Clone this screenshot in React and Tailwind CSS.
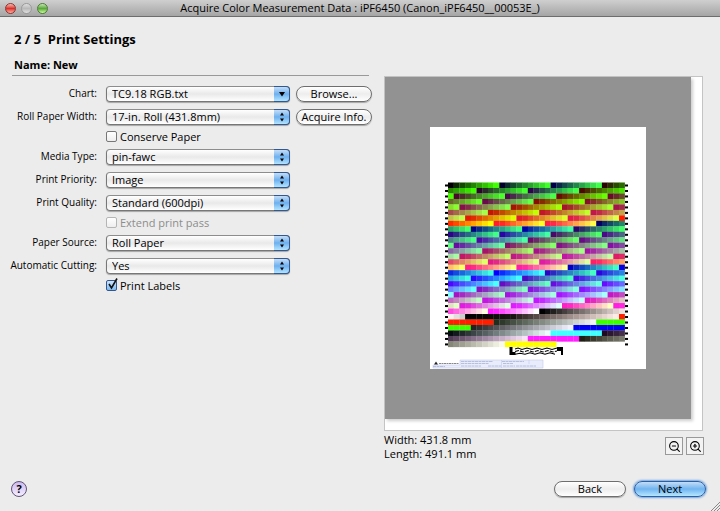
import { ZoomIn, ZoomOut } from "lucide-react";

const COLS = 31;
const LEVELS = [0, 42, 74, 104, 134, 164, 194, 224, 255];

const display = ([r, g, b]) =>
  `rgb(${Math.round(Math.max(r, g * 0.25))},${Math.round(Math.max(g, r * 0.12))},${Math.round(b)})`;

const repeat = (color, n) => Array.from({ length: n }, () => display(color));

const ramp = (n, from, to) =>
  Array.from({ length: n }, (_, i) => {
    const t = i / (n - 1);
    return `rgb(${from.map((c, k) => Math.round(c + (to[k] - c) * t)).join(",")})`;
  });

function buildPatches() {
  const patches = [];
  for (let block = 0; block < 3; block++) {
    for (const r of LEVELS) {
      for (let step = 0; step < 3; step++) {
        for (const g of LEVELS) {
          patches.push(display([r, g, LEVELS[block * 3 + step]]));
        }
      }
    }
  }
  return patches.concat(
    ramp(15, [0, 0, 0], [240, 225, 220]),
    ramp(3, [250, 240, 240], [205, 205, 205]),
    ramp(9, [0, 0, 0], [25, 20, 18]),
    ramp(18, [50, 38, 36], [255, 235, 230]),
    repeat([255, 30, 0], 9),
    ramp(18, [35, 45, 30], [240, 245, 245]),
    repeat([0, 255, 0], 9),
    ramp(18, [35, 35, 35], [240, 240, 255]),
    repeat([0, 0, 240], 9),
    ramp(18, [5, 12, 15], [235, 250, 250]),
    repeat([40, 255, 255], 9),
    ramp(18, [30, 10, 35], [250, 225, 250]),
    repeat([255, 0, 255], 9),
    ramp(18, [30, 30, 20], [250, 250, 235]),
    repeat([255, 255, 0], 9)
  );
}

const PATCHES = buildPatches();

function Chart() {
  return (
    <svg viewBox="0 0 216 242" className="block w-full">
      <g transform="translate(18 55.5)">
        {PATCHES.map((fill, i) => (
          <rect
            key={i}
            x={(i % COLS) * 5.7}
            y={Math.floor(i / COLS) * 5.48}
            width="5.9"
            height="5.7"
            fill={fill}
          />
        ))}
        {Array.from({ length: 30 }, (_, i) => (
          <g key={i}>
            <rect x="-3" y={i * 5.48 + 2} width="3" height="2" />
            <rect x="177" y={i * 5.48 + 2} width="3" height="2" />
          </g>
        ))}
      </g>
      {/* alignment strip */}
      <path d="M79.500 220h3v5h3v3h-6zM127 220h6v8h-2v-4h-4z" />
      <g fill="none" stroke="#000" strokeWidth="1.100">
        <path d="M85 222l3-1 4 1.500 5-1.500 5 1.500 5-1.500 5 1.500 5-1.500 5 1.500 5-1.500" />
        <path d="M85 224.500l4-1 4 1.500 5-1.500 5 1.500 5-1.500 5 1.500 5-1.500 5 1.500 4-1" strokeDasharray="4 1.200" />
        <path d="M85 227.300l5-1 5 1 5-1.500 5 1.500 5-1.500 5 1.500 5-1.500 5 1.500" />
      </g>
      {/* caption block */}
      <path d="M30 233h83v8H3v-3h27z" fill="#e9edfb" stroke="#b9c3e6" strokeWidth="0.5" />
      <path d="M4 237.500l2-3 2 3z" fill="#222" />
      <path d="M9 236.500h20" stroke="#888" strokeDasharray="2 0.500" />
      <path
        d="M31 234.500h32M72 234.500h22M31 236.500h28M31 239h20M58 239h13M73 236.500h10M73 239h12M3 239.500h12M86 239h20"
        stroke="#a9b3d6"
        strokeWidth="0.800"
        strokeDasharray="3 0.500"
      />
      <path d="M71.500 233v8M99 233v4" stroke="#b9c3e6" strokeWidth="0.500" />
    </svg>
  );
}

function Select({ id, value, single }) {
  return (
    <div className="relative h-4 w-[184px]">
      <select
        id={id}
        defaultValue={value}
        className="block h-4 w-full appearance-none rounded border border-[#777] border-t-[#8d8d8d] bg-linear-to-b from-white via-[#e9e9e9] to-white pl-[5px] text-[11px] leading-[14px] text-black shadow-[0_1px_1px_rgba(0,0,0,0.3)]"
      >
        <option>{value}</option>
      </select>
      <span className="pointer-events-none absolute inset-y-0 right-0 flex w-4 items-center justify-center rounded-r border border-l-0 border-[#33588f] bg-linear-to-b from-[#c5ddf6] via-[#6cb0ef] to-[#b4e4ff]">
        <svg viewBox="0 0 8 10" className="h-2.5 w-2">
          {single ? (
            <path d="M1 3h6L4 7.500z" />
          ) : (
            <path d="M4 0.500L6 3.500H2zM4 9.500L2 6.500h4z" />
          )}
        </svg>
      </span>
    </div>
  );
}

function PushButton({ children, className }) {
  return (
    <button
      type="button"
      className={`h-4 rounded-full border border-[#6e6e6e] bg-linear-to-b from-white via-[#ededed] to-white text-[11px] leading-[14px] shadow-[0_1px_1px_rgba(0,0,0,0.3)] ${className}`}
    >
      {children}
    </button>
  );
}

function Row({ id, label, value, single, children }) {
  return (
    <div className="flex h-[23px] items-center">
      <label htmlFor={id} className="w-[97px] shrink-0 pb-0.5 text-right text-[10px] leading-4">
        {label}
      </label>
      <div className="ml-[9px] flex items-center gap-1.5">
        <Select id={id} value={value} single={single} />
        {children}
      </div>
    </div>
  );
}

function Check({ label, checked, disabled }) {
  return (
    <div className="ml-[106px] flex h-[17px] items-center">
      <label className={`flex items-center gap-[3px] text-[11px] leading-4 ${disabled ? "text-[#8c8c8c]" : ""}`}>
        <span className="relative size-[11px]">
          <input
            type="checkbox"
            defaultChecked={checked}
            disabled={disabled}
            className="block size-[11px] appearance-none rounded-xs border border-[#777] bg-linear-to-b from-white to-[#eee] checked:border-[#33588f] checked:from-[#cfe3f8] checked:to-[#7dbcf2] disabled:border-[#b5b5b5]"
          />
          {checked && (
            <svg viewBox="0 0 12 12" className="pointer-events-none absolute -top-0.5 left-0 size-3">
              <path d="M3 6l2.500 4L11 0.500" fill="none" stroke="#111" strokeWidth="1.600" />
            </svg>
          )}
        </span>
        {label}
      </label>
    </div>
  );
}

export default function App() {
  return (
    <div className="flex min-h-screen flex-col bg-[#ececec] font-['Open_Sans','Noto_Sans',sans-serif] text-black">
      <header className="relative flex h-[17px] items-center justify-center border-b border-[#6d6d6d] bg-linear-to-b from-[#cfcfcf] to-[#a5a5a5]">
        <div className="absolute left-[5px] flex gap-[5px]">
          <button type="button" aria-label="Close" className="size-[11px] rounded-full border border-[#8b3531] bg-linear-to-b from-[#f6b5b0] via-[#d9302b] to-[#ffaaa2]" />
          <button type="button" aria-label="Minimize" className="size-[11px] rounded-full border border-[#9a9a9a] bg-linear-to-b from-[#dedede] via-[#b9b9b9] to-[#e0e0e0]" />
          <button type="button" aria-label="Zoom" className="size-[11px] rounded-full border border-[#4c7a34] bg-linear-to-b from-[#c5e6b0] via-[#58a83a] to-[#ceff9c]" />
        </div>
        <h1 className="text-[11px] leading-4">
          Acquire Color Measurement Data : iPF6450 (Canon_iPF6450__00053E_)
        </h1>
      </header>

      <main className="flex flex-1 justify-between pr-[17px]">
        <section className="w-[372px] shrink-0">
          <h2 className="mt-3.5 ml-3.5 text-[13px] leading-4 font-bold whitespace-pre">2 / 5  Print Settings</h2>
          <div className="mt-2 mr-[3px] ml-3 border-b border-[#999] pl-0.5 text-[11px] leading-5 font-bold">Name: New</div>
          <form className="mt-1.5">
            <Row id="chart" label="Chart:" value="TC9.18 RGB.txt" single>
              <PushButton className="w-[76px]">Browse...</PushButton>
            </Row>
            <Row id="width" label="Roll Paper Width:" value="17-in. Roll (431.8mm)">
              <PushButton className="w-[76px]">Acquire Info.</PushButton>
            </Row>
            <Check label="Conserve Paper" />
            <Row id="media" label="Media Type:" value="pin-fawc" />
            <Row id="priority" label="Print Priority:" value="Image" />
            <Row id="quality" label="Print Quality:" value="Standard (600dpi)" />
            <Check label="Extend print pass" disabled />
            <Row id="source" label="Paper Source:" value="Roll Paper" />
            <Row id="cutting" label="Automatic Cutting:" value="Yes" />
            <Check label="Print Labels" checked />
          </form>
        </section>

        <section className="mt-[59px] w-[319px]">
          <div className="border border-[#c4c4c4] bg-white pr-[11px] pb-[11px]">
            <div className="bg-[#929292] px-[45px] pt-[50px] pb-[50px] shadow-[2px_2px_3px_rgba(0,0,0,0.2)]">
              <div className="bg-white">
                <Chart />
              </div>
            </div>
          </div>
          <div className="flex justify-between pt-0.5">
            <div className="text-[11px] leading-[14px]">
              <p>Width: 431.8 mm</p>
              <p>Length: 491.1 mm</p>
            </div>
            <div className="-mr-px mt-1 flex gap-[3px]">
              <button type="button" aria-label="Zoom out" className="flex size-[18px] items-center justify-center border border-[#999] bg-[#f3f3f3]">
                <ZoomOut size={13} />
              </button>
              <button type="button" aria-label="Zoom in" className="flex size-[18px] items-center justify-center border border-[#999] bg-[#f3f3f3]">
                <ZoomIn size={13} />
              </button>
            </div>
          </div>
        </section>
      </main>

      <footer className="relative flex items-center justify-between pt-4 pr-3.5 pb-3.5 pl-[11px]">
        <button type="button" className="size-4 rounded-full border border-[#5f5377] bg-linear-to-b from-[#cdb9ee] to-[#f5eeff] text-[11px] leading-[14px] font-bold">?</button>
        <div className="flex gap-2">
          <PushButton className="w-[72px]">Back</PushButton>
          <button
            type="button"
            className="h-4 w-[72px] rounded-full border border-[#2a5fa8] bg-linear-to-b from-[#c3dcf6] via-[#6fb4f1] to-[#b6e6ff] text-[11px] leading-[14px] shadow-[0_0_2px_1px_#6fa3dc]"
          >
            Next
          </button>
        </div>
        <svg viewBox="0 0 10 10" className="absolute right-0 bottom-0 size-2.5">
          <path d="M1 10L10 1M4 10l6-6M7 10l3-3" stroke="#888" />
        </svg>
      </footer>
    </div>
  );
}
